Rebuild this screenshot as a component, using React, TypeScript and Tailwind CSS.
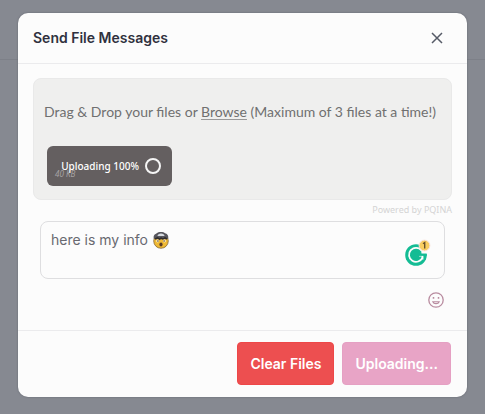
import { useState } from "react";

function CloseIcon() {
  return (
    <svg viewBox="0 0 12 12" className="size-3" fill="none" stroke="#565b67" strokeWidth="1.5" aria-hidden="true">
      <path d="M1 1l10 10M11 1L1 11" />
    </svg>
  );
}

function MindBlownIcon() {
  return (
    <svg viewBox="0 0 18 18" className="size-[18px]" role="img" aria-label="Exploding head">
      <circle cx="9" cy="10" r="7.3" fill="#efb934" stroke="#765c36" strokeWidth="0.7" />
      <path d="M1.8 7.5C1 3.7 3.5 3 4.8 2.2 6 .6 11.7.3 13 2.2c2 .6 3.8 2 3.2 5.3l-2 .8H4z" fill="#56565d" />
      <path d="M5.5 5c0-1.8 1.5-2.6 3.5-2.6s3.5.8 3.5 2.6z" fill="#d7dbe0" />
      <path d="M3 8l2.5-1.2 2 1.2 1.6-1 1.9 1 2-1.2L15 8" fill="none" stroke="#2f2c2d" strokeWidth="1.5" />
      <circle cx="5.6" cy="10" r="1.4" fill="#fff4cf" />
      <circle cx="12.4" cy="10" r="1.4" fill="#fff4cf" />
      <circle cx="5.9" cy="10" r="0.8" fill="#4c3927" />
      <circle cx="12.1" cy="10" r="0.8" fill="#4c3927" />
      <ellipse cx="9" cy="13.6" rx="1.6" ry="2" fill="#5b3b25" />
    </svg>
  );
}

function AssistantLogo() {
  return (
    <svg viewBox="0 0 28 28" className="size-7" aria-hidden="true">
      <circle cx="13" cy="16" r="10.8" fill="#14bc94" />
      <path d="M18.5 11.5A7 7 0 1 0 19.5 18.5" fill="none" stroke="#fcfcfc" strokeWidth="1.8" />
      <path d="M15 16.5h4.5v4" fill="none" stroke="#fcfcfc" strokeWidth="1.8" />
      <path d="M18 10.5l7 1.2-.5 3h-6z" fill="#fcfcfc" />
      <path d="M15.5 15.8h8.2" fill="none" stroke="#14bc94" strokeWidth="2.2" />
      <circle cx="12.5" cy="16" r="3.8" fill="#14bc94" />
      <circle cx="21.5" cy="6.5" r="5.4" fill="#f9cd62" stroke="#fbe3dc" strokeWidth="1" />
      <path d="M20 4.7l1.7-1.2v6" fill="none" stroke="#68502b" strokeWidth="1.4" />
    </svg>
  );
}

function SmileIcon() {
  return (
    <svg viewBox="0 0 16 16" className="size-4" fill="none" stroke="#b98ca0" strokeWidth="1.3" aria-hidden="true">
      <circle cx="8" cy="8" r="7.2" />
      <path d="M4.8 9.7c1 2.6 5.4 2.6 6.4 0z" strokeWidth="1.1" />
      <path d="M5.5 5v1.7M10.5 5v1.7" strokeWidth="1.5" />
    </svg>
  );
}

export default function App() {
  const [message, setMessage] = useState("here is my info ");

  return (
    <div className="relative min-h-screen bg-[#868991] px-[18px] pt-[13px] pb-4 font-['Inter','Liberation_Sans',sans-serif]">
      <div className="absolute inset-x-0 top-0 h-[60px] border-b border-[#7d8088]" />
      <section
        role="dialog"
        aria-labelledby="title"
        className="relative rounded-[10px] bg-[#fcfcfc] shadow-[0_0_2px_#5f626b]"
      >
        <header className="flex h-[51px] items-center justify-between border-b border-[#ebebed] pr-4 pl-[15px]">
          <h1 id="title" className="text-sm leading-5 font-semibold text-[#30313e]">Send File Messages</h1>
          <button type="button" aria-label="Close" className="flex size-7 items-center justify-center">
            <CloseIcon />
          </button>
        </header>

        <div className="px-[15px] pt-[14px] pb-[22px]">
          <div className="rounded-lg border border-[#e9e9e9] bg-[#efefee] px-2.5 pt-[23px] pb-[13px] font-['Noto_Sans',sans-serif]">
            <p className="font-['Lato','Noto_Sans',sans-serif] text-sm leading-5 whitespace-nowrap text-[#707070]">
              Drag &amp; Drop your files or{" "}
              <label htmlFor="files" className="cursor-pointer underline decoration-[#999] underline-offset-2">Browse</label>
              {" "}(Maximum of 3 files at a time!)
            </p>
            <input id="files" type="file" multiple className="sr-only" />
            <div className="relative mt-6 ml-[3px] flex h-10 w-[125px] items-center justify-end gap-1.5 rounded-md bg-[#645f60] pr-[11px] text-white">
              <span className="absolute bottom-1.5 left-2 text-[8px] leading-3 text-[#a7a3a4] italic">40 KB</span>
              <span className="relative text-[10px] leading-4 font-medium whitespace-nowrap">Uploading 100%</span>
              <span className="size-4 shrink-0 rounded-full border-2 border-[#f5f5f5]" />
            </div>
          </div>
          <p className="pt-1 text-right font-['Noto_Sans',sans-serif] text-[9px] leading-3 text-[#d4d4d4]">
            Powered by PQINA
          </p>

          <div className="relative mx-[7px] mt-[5px]">
            <textarea
              aria-label="Message"
              value={message}
              onChange={(event) => setMessage(event.target.value)}
              className="block h-[58px] w-full resize-none rounded-lg border border-[#dedee0] bg-[#fcfcfc] px-2.5 py-2 text-sm leading-5 text-[#686970] outline-none"
            />
            <span className="pointer-events-none absolute top-2.5 left-28"><MindBlownIcon /></span>
            <span className="absolute right-3.5 bottom-3"><AssistantLogo /></span>
          </div>

          <div className="mt-[13px] mr-2 flex justify-end">
            <button type="button" aria-label="Add emoji"><SmileIcon /></button>
          </div>
        </div>

        <footer className="flex justify-end gap-2 border-t border-[#ebebed] pt-[11px] pr-4 pb-3 text-sm font-semibold text-white">
          <button type="button" className="h-[43px] rounded-[4px] border border-[#ee4748] bg-[#ed4f50] px-3">Clear Files</button>
          <button type="button" className="h-[43px] rounded-[4px] border border-[#e5a0c3] bg-[#e8a4c6] px-3">Uploading...</button>
        </footer>
      </section>
    </div>
  );
}
